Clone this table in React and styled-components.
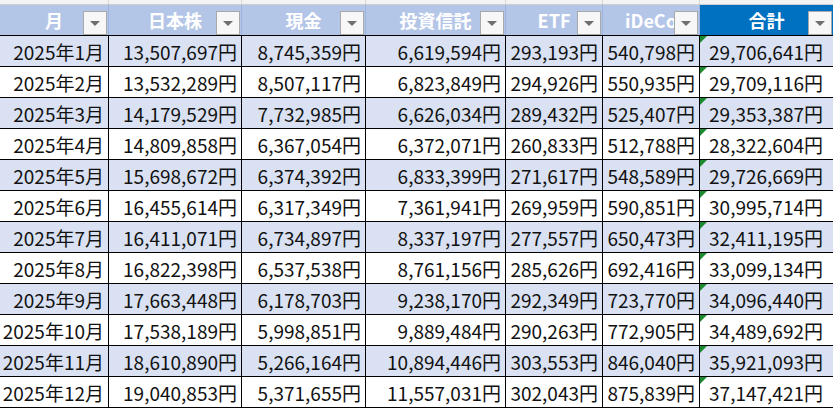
import React from 'react';
import styled, { createGlobalStyle } from 'styled-components';

const GlobalStyle = createGlobalStyle`
  html, body {
    margin: 0;
    padding: 0;
    background: #ffffff;
    overflow: hidden;
  }
  body {
    font-family: "Noto Sans CJK JP", "Noto Sans", sans-serif;
  }
`;

const COLS = '109px 133px 124px 140px 97px 97px 134px';

const Sheet = styled.div`
  width: 833px;
  height: 408px;
  overflow: hidden;
`;

const TopStrip = styled.div`
  display: grid;
  grid-template-columns: ${COLS};
  height: 5px;
  background: #f3f3f3;
  border-bottom: 1px solid #cfcfcf;
  box-sizing: border-box;
`;

const StripCell = styled.div`
  border-right: 1px solid #d6d6d6;
`;

const Row = styled.div`
  display: grid;
  grid-template-columns: ${COLS};
  height: 31px;
  border-bottom: 1px solid #000;
  box-sizing: border-box;
  background: ${p => (p.$band ? '#d9e1f2' : '#ffffff')};
`;

const HeaderRow = styled(Row)`
  background: #b4c6e7;
`;

const HeadCell = styled.div`
  position: relative;
  display: flex;
  align-items: center;
  justify-content: center;
  border-right: 1px solid ${p => (p.$total ? '#0070c0' : '#9fb4dc')};
  background: ${p => (p.$total ? '#0070c0' : 'transparent')};
  color: #ffffff;
  font-size: 18px;
  font-weight: 700;
  white-space: nowrap;
  overflow: hidden;
`;

const FilterButton = styled.span`
  position: absolute;
  right: 1px;
  bottom: 0;
  width: 24px;
  height: 24px;
  box-sizing: border-box;
  background: #f7f7f7;
  border: 1px solid #a9a9a9;
  display: flex;
  align-items: center;
  justify-content: center;

  &::after {
    content: '';
    width: 0;
    height: 0;
    border-left: 5px solid transparent;
    border-right: 5px solid transparent;
    border-top: 5px solid #6e6e6e;
  }
`;

const Cell = styled.div`
  position: relative;
  display: flex;
  align-items: center;
  justify-content: flex-end;
  padding-right: ${p => (p.$total ? '10px' : '4px')};
  border-right: 1px solid #000;
  color: #111;
  font-size: 19px;
  white-space: nowrap;
  overflow: hidden;
`;

const ErrorMark = styled.span`
  position: absolute;
  left: 0;
  top: 0;
  width: 0;
  height: 0;
  border-top: 7px solid #1c8a2e;
  border-right: 7px solid transparent;
`;

const headers = ['月', '日本株', '現金', '投資信託', 'ETF', 'iDeCo', '合計'];

const data = [
  ['2025年1月', 13507697, 8745359, 6619594, 293193, 540798, 29706641],
  ['2025年2月', 13532289, 8507117, 6823849, 294926, 550935, 29709116],
  ['2025年3月', 14179529, 7732985, 6626034, 289432, 525407, 29353387],
  ['2025年4月', 14809858, 6367054, 6372071, 260833, 512788, 28322604],
  ['2025年5月', 15698672, 6374392, 6833399, 271617, 548589, 29726669],
  ['2025年6月', 16455614, 6317349, 7361941, 269959, 590851, 30995714],
  ['2025年7月', 16411071, 6734897, 8337197, 277557, 650473, 32411195],
  ['2025年8月', 16822398, 6537538, 8761156, 285626, 692416, 33099134],
  ['2025年9月', 17663448, 6178703, 9238170, 292349, 723770, 34096440],
  ['2025年10月', 17538189, 5998851, 9889484, 290263, 772905, 34489692],
  ['2025年11月', 18610890, 5266164, 10894446, 303553, 846040, 35921093],
  ['2025年12月', 19040853, 5371655, 11557031, 302043, 875839, 37147421],
];

const yen = n => `${n.toLocaleString('en-US')}円`;

export default function App() {
  return (
    <Sheet>
      <GlobalStyle />
      <TopStrip>
        {headers.map(h => <StripCell key={h} />)}
      </TopStrip>
      <HeaderRow>
        {headers.map((h, i) => (
          <HeadCell key={h} $total={i === 6}>
            {h}
            <FilterButton />
          </HeadCell>
        ))}
      </HeaderRow>
      {data.map((row, r) => (
        <Row key={row[0]} $band={r % 2 === 0}>
          {row.map((v, i) => (
            <Cell key={i} $total={i === 6}>
              {i === 6 && <ErrorMark />}
              {i === 0 ? v : yen(v)}
            </Cell>
          ))}
        </Row>
      ))}
    </Sheet>
  );
}
